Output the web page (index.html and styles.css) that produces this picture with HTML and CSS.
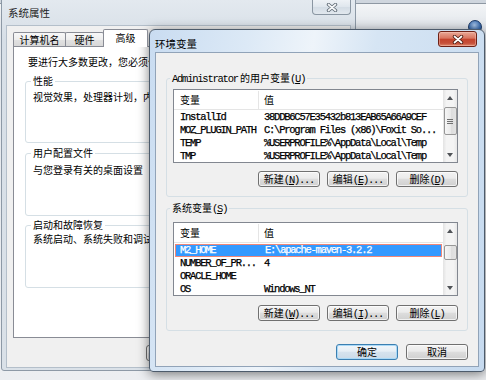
FILE: index.html
```html
<!doctype html>
<html>
<head>
  <meta charset="utf-8">
  <title>环境变量</title>
  <link rel="stylesheet" href="styles.css">
</head>
<body>
  <!-- 系统属性: the inactive window behind -->
  <div class="win win-back">
    <div class="titlebar">
      <span class="title">系统属性</span>
      <span class="close close-off">
        <svg width="12" height="9" viewBox="0 0 12 9"><path d="M2.5 1.5 L9.5 7.5 M9.5 1.5 L2.5 7.5" stroke="#5d6873" stroke-width="3.4" stroke-linecap="round"/><path d="M2.5 1.5 L9.5 7.5 M9.5 1.5 L2.5 7.5" stroke="#f5f7f9" stroke-width="1.7" stroke-linecap="round"/></svg>
      </span>
    </div>
    <div class="client">
      <div class="tabs">
        <span class="tab tab-name">计算机名</span>
        <span class="tab tab-hw">硬件</span>
        <span class="tab tab-adv tab-on">高级</span>
      </div>
      <div class="panel">
        <p class="note">要进行大多数更改，您必须作为管理员登录。</p>
        <fieldset class="group g1">
          <legend>性能</legend>
          <p>视觉效果，处理器计划，内存使用，以及虚拟内存</p>
        </fieldset>
        <fieldset class="group g2">
          <legend>用户配置文件</legend>
          <p>与您登录有关的桌面设置</p>
        </fieldset>
        <fieldset class="group g3">
          <legend>启动和故障恢复</legend>
          <p>系统启动、系统失败和调试信息</p>
        </fieldset>
      </div>
      <div class="actions">
        <button class="btn">确定</button>
        <button class="btn">取消</button>
        <button class="btn">应用<span class="mono">(<u>A</u>)</span></button>
      </div>
    </div>
  </div>

  <div class="orb"></div>

  <!-- 环境变量: the active dialog -->
  <div class="win win-env">
    <div class="titlebar">
      <span class="title">环境变量</span>
      <span class="close close-red">
        <svg width="12" height="9" viewBox="0 0 12 9"><path d="M2.5 1.5 L9.5 7.5 M9.5 1.5 L2.5 7.5" stroke="#4a1a10" stroke-width="3.4" stroke-linecap="round"/><path d="M2.5 1.5 L9.5 7.5 M9.5 1.5 L2.5 7.5" stroke="#fff" stroke-width="1.7" stroke-linecap="round"/></svg>
      </span>
    </div>
    <div class="client">
      <fieldset class="group vars">
        <legend><span class="mono">Administrator</span> 的用户变量<span class="mono">(<u>U</u>)</span></legend>
        <div class="listbox">
          <div class="list">
            <div class="list-head"><span class="col-name">变量</span><span class="col-val">值</span></div>
            <div class="rows mono">
              <div class="row"><span class="col-name">InstallId</span><span class="col-val">38DDB6C57E35432b813EAB65A66A9CEF</span></div>
              <div class="row"><span class="col-name">MOZ_PLUGIN_PATH</span><span class="col-val">C:\Program Files (x86)\Foxit So...</span></div>
              <div class="row"><span class="col-name">TEMP</span><span class="col-val">%USERPROFILE%\AppData\Local\Temp</span></div>
              <div class="row"><span class="col-name">TMP</span><span class="col-val">%USERPROFILE%\AppData\Local\Temp</span></div>
            </div>
          </div>
          <div class="scrollbar">
            <span class="arrow arrow-up"></span>
            <span class="thumb grip" style="margin-top: 2px; height: 28px;"></span>
            <span class="arrow arrow-down"></span>
          </div>
        </div>
        <div class="btn-row">
          <button class="btn">新建<span class="mono">(<u>N</u>)...</span></button>
          <button class="btn">编辑<span class="mono">(<u>E</u>)...</span></button>
          <button class="btn">删除<span class="mono">(<u>D</u>)</span></button>
        </div>
      </fieldset>

      <fieldset class="group vars sys">
        <legend>系统变量<span class="mono">(<u>S</u>)</span></legend>
        <div class="listbox">
          <div class="list">
            <div class="list-head"><span class="col-name">变量</span><span class="col-val">值</span></div>
            <div class="rows mono">
              <div class="row row-on"><span class="col-name">M2_HOME</span><span class="col-val">E:\apache-maven-3.2.2</span></div>
              <div class="row"><span class="col-name">NUMBER_OF_PR...</span><span class="col-val">4</span></div>
              <div class="row"><span class="col-name">ORACLE_HOME</span><span class="col-val"></span></div>
              <div class="row"><span class="col-name">OS</span><span class="col-val">Windows_NT</span></div>
            </div>
          </div>
          <div class="scrollbar">
            <span class="arrow arrow-up"></span>
            <span class="thumb" style="margin-top: 7px; height: 15px;"></span>
            <span class="arrow arrow-down"></span>
          </div>
        </div>
        <div class="btn-row">
          <button class="btn">新建<span class="mono">(<u>W</u>)...</span></button>
          <button class="btn">编辑<span class="mono">(<u>I</u>)...</span></button>
          <button class="btn">删除<span class="mono">(<u>L</u>)</span></button>
        </div>
      </fieldset>

      <div class="dlg-actions">
        <button class="btn btn-default">确定</button>
        <button class="btn">取消</button>
      </div>
    </div>
  </div>
</body>
</html>
```

FILE: styles.css
```css
* {
  box-sizing: border-box;
  margin: 0;
  padding: 0;
}

html, body { height: 100% }

body {
  position: relative;
  overflow: hidden;
  font-family: "Noto Sans CJK SC", sans-serif;
  font-size: 10px;
  line-height: 12px;
  color: #000;
  background: linear-gradient(to bottom, #cfd6de 0, #cfd6de 3px, #8e98a3 3px, #8e98a3 4px, #f3f5f7 4px, #e3e7ec 26px, #eceef1 100%);
}

.mono {
  font-family: "Liberation Mono", monospace;
  font-size: 10.5px;
  letter-spacing: -1.24px;
}

u { text-decoration: underline }

/* windows */

.win {
  position: absolute;
  display: flex;
  flex-direction: column;
  border: 1px solid #8d99a6;
}

.win-back {
  left: 1px;
  top: -1px;
  width: 355px;
  height: 372px;
  padding: 0 5px 3px;
  border-radius: 0 0 3px 3px;
  background: linear-gradient(to bottom, #e3e9ef, #d7dfe7 40px, #dae1e8);
}

.win-env {
  left: 149px;
  top: 29px;
  width: 336px;
  height: 343px;
  padding: 0 6px 5px;
  border-color: #4d5b6b;
  border-radius: 6px 6px 4px 4px;
  background: linear-gradient(100deg, #c9dcf1 0%, #dce9f6 25%, #eef4fa 42%, #d6e5f4 58%, #c6daef 100%);
  box-shadow: 0 2px 12px rgba(0, 0, 0, 0.5);
}

.titlebar {
  flex: none;
  display: flex;
  justify-content: space-between;
  align-items: flex-start;
}

.win-back .titlebar { height: 26px }
.win-env .titlebar { height: 23px }

.title {
  font-size: 10.5px;
  line-height: 12px;
}

.win-back .title {
  padding: 7px 0 0 1px;
  color: #222;
}

.win-env .title {
  padding-top: 8px;
  margin-left: -1px;
}

.close {
  display: flex;
  align-items: center;
  justify-content: center;
  width: 39px;
}

.close-off {
  height: 15px;
  margin-right: -1px;
  border: 1px solid #8a96a2;
  border-top: 0;
  border-radius: 0 0 4px 4px;
  background: linear-gradient(to bottom, #eef2f6, #dfe6ed 50%, #d3dce5 51%, #e2e8ee);
}

.close-red {
  height: 16px;
  margin: 1px 1px 0 0;
  border: 1px solid #6d2116;
  border-radius: 3px;
  background: linear-gradient(to bottom, #e9a896 0%, #d9745f 45%, #c4432c 50%, #c6503a 80%, #df8a6d 100%);
  box-shadow: inset 0 0 0 1px rgba(255, 210, 200, 0.4);
}

.client {
  flex: 1;
  display: flex;
  flex-direction: column;
  background: #f0f0f0;
}

.win-back .client {
  padding: 3px 6px 6px;
  box-shadow: 0 0 0 1px #b4bfca;
}

.win-env .client {
  padding: 19px 10px 0;
  box-shadow: 0 0 0 1px #91a3b8;
}

/* tabs on the back window */

.tabs {
  flex: none;
  display: flex;
  align-items: flex-end;
  height: 17px;
}

.tab {
  height: 14px;
  margin-right: -1px;
  padding-top: 1px;
  text-align: center;
  border: 1px solid #898c95;
  border-bottom: 0;
  border-radius: 2px 2px 0 0;
  background: linear-gradient(to bottom, #f8f8f8, #eeeeee 50%, #e2e2e2 51%, #d8d8d8);
}

.tab-name { width: 53px }
.tab-hw { width: 39px }
.tab-adv { width: 45px }

.tab-on {
  position: relative;
  z-index: 1;
  height: 18px;
  margin-bottom: -1px;
  padding-top: 2px;
  background: #fff;
}

.panel {
  flex: none;
  height: 292px;
  padding: 9px 11px 0;
  background: #fff;
  border: 1px solid #898c95;
}

.note { padding-left: 3px }

/* group boxes */

.group {
  min-width: 0;
  border: 1px solid #d5dfe5;
  border-radius: 3px;
}

.group legend {
  margin-left: -2px;
  padding: 0 2px;
  line-height: 12px;
}

.panel .group { padding: 0 7px }
.g1 { margin-top: 7px; height: 68px; padding-top: 4px !important }
.g2 { margin-top: 4px; height: 69px; padding-top: 5px !important }
.g3 { margin-top: 3px; height: 69px; padding-top: 2px !important }

.vars { padding: 0 6px 9px }
.vars legend { margin-left: -3px }
.sys { margin-top: 5px }

/* list views */

.listbox {
  display: flex;
  width: 285px;
  height: 74px;
  margin-top: 4px;
  border: 1px solid #828790;
  background: #fff;
}

.sys .listbox { margin-top: 7px }

.list {
  flex: 1;
  min-width: 0;
  overflow: hidden;
}

.list-head {
  display: flex;
  height: 20px;
  padding-top: 1px;
  line-height: 18px;
  border-bottom: 1px solid #e5e5e5;
}

.list-head .col-name { border-right: 1px solid #e5e5e5 }

.col-name {
  flex: none;
  width: 85px;
  padding-left: 6px;
  white-space: nowrap;
  overflow: hidden;
}

.col-val {
  flex: 1;
  padding-left: 5px;
  white-space: nowrap;
  overflow: hidden;
}

.rows {
  padding-top: 1px;
  -webkit-text-stroke: 0.25px currentColor;
}

.row {
  display: flex;
  height: 13px;
  line-height: 13px;
}

.row-on {
  margin: 0 1px;
  color: #fff;
  background: #3399ff;
  box-shadow: inset 0 0 0 1px #ef8779;
}

.row-on .col-name { padding-left: 5px }

.scrollbar {
  flex: none;
  display: flex;
  flex-direction: column;
  align-items: center;
  width: 14px;
  background: linear-gradient(to right, #e3e3e3, #f4f4f4 25%, #f4f4f4 75%, #e7e7e7);
}

.arrow {
  flex: none;
  display: flex;
  align-items: center;
  justify-content: center;
  width: 14px;
  height: 15px;
}

.arrow::before {
  content: "";
  border-left: 3.5px solid transparent;
  border-right: 3.5px solid transparent;
}

.arrow-up::before { border-bottom: 4px solid #505357 }

.arrow-down { margin-top: auto }
.arrow-down::before { border-top: 4px solid #505357 }

.thumb {
  flex: none;
  display: flex;
  align-items: center;
  justify-content: center;
  width: 13px;
  border: 1px solid #979797;
  border-radius: 2px;
  background: linear-gradient(to right, #f6f6f6, #e9e9e9 50%, #dcdcdc 51%, #e3e3e3);
}

.grip::after {
  content: "";
  width: 6px;
  height: 5px;
  background: repeating-linear-gradient(to bottom, #707070 0, #707070 1px, transparent 1px, transparent 2px);
}

/* buttons */

.btn-row,
.actions,
.dlg-actions {
  display: flex;
  justify-content: flex-end;
}

.btn-row {
  width: 285px;
  gap: 7px;
  margin-top: 8px;
}

.sys .btn-row { margin-top: 9px }

.actions {
  gap: 6px;
  margin-top: 7px;
}

.dlg-actions {
  gap: 8px;
  margin-top: 13px;
}

.btn {
  flex: none;
  width: 62px;
  height: 16px;
  font: inherit;
  line-height: 14px;
  color: #000;
  border: 1px solid #707070;
  border-radius: 3px;
  background: linear-gradient(to bottom, #f3f3f3, #ebebeb 45%, #dddddd 50%, #d0d0d0);
  box-shadow: inset 0 0 0 1px rgba(255, 255, 255, 0.7);
}

.btn-default {
  border-color: #3c7fb1;
  background: linear-gradient(to bottom, #f2f7fb, #e6eef5 45%, #d6e3ee 50%, #ccdbe8);
  box-shadow: inset 0 0 0 1px #a9d9f7;
}

/* the round button peeking out behind the dialog */

.orb {
  position: absolute;
  left: 468px;
  top: 20px;
  width: 14px;
  height: 14px;
  border-radius: 50%;
  border: 1px solid #1d3a66;
  background: radial-gradient(circle at 45% 35%, #a9c6ea, #3c6eb0 55%, #1f4479);
}
```
